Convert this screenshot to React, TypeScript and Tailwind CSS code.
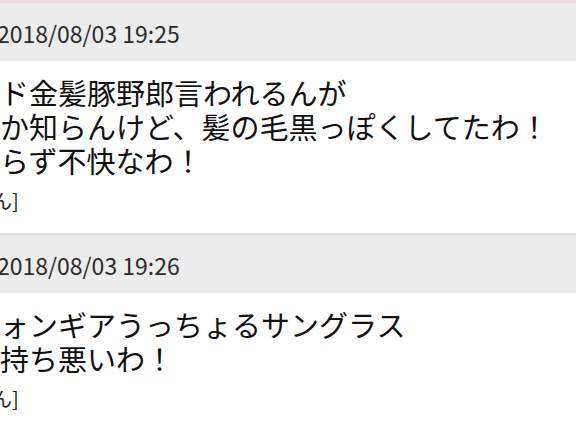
const posts = [
  {
    date: '2018/08/03 19:25',
    lines: ['ド金髪豚野郎言われるんが', 'か知らんけど、髪の毛黒っぽくしてたわ！', 'らず不快なわ！'],
    name: 'ん]',
  },
  {
    date: '2018/08/03 19:26',
    lines: ['ォンギアうっちょるサングラス', '持ち悪いわ！'],
    name: 'ん]',
  },
]

export default function App() {
  return (
    <div className="w-[576px] h-[430px] overflow-hidden bg-white font-['Noto_Sans_CJK_JP','Noto_Sans',sans-serif]">
      <div className="h-[3px] bg-[#e6dcdc]" />
      {posts.map((post, index) => (
        <div key={index} className={index > 0 ? 'border-t-2 border-[#e0e0e0]' : ''}>
          <div className="h-[58px] flex items-center pt-[2px] bg-[#ececec] text-[23px] text-[#2b2b2b]">
            <span className="-ml-[3px]">{post.date}</span>
          </div>
          <div className="pt-[14px] pb-[17px] text-[#111]">
            {post.lines.map((line, i) => (
              <div key={i} className="text-[29px] leading-[34px] whitespace-nowrap">
                {line}
              </div>
            ))}
            <div className="mt-[9px] -ml-[8px] text-[20px] leading-[30px] text-[#222]">{post.name}</div>
          </div>
        </div>
      ))}
    </div>
  )
}
